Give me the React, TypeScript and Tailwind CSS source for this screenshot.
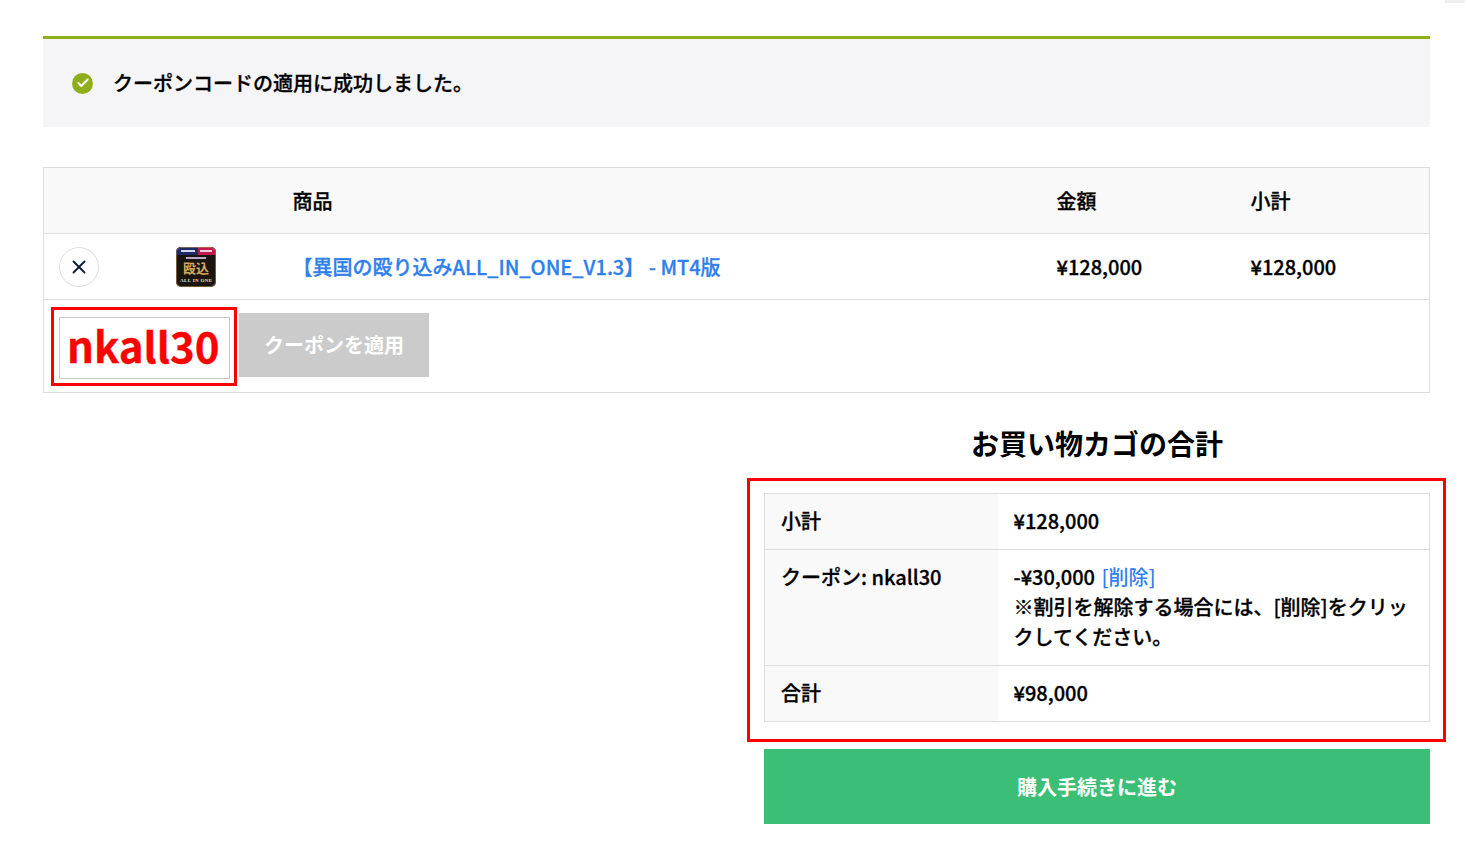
import { Check, X } from "lucide-react";

const font = "font-['Noto_Sans_CJK_JP','Noto_Sans',sans-serif]";

function Thumb() {
  return (
    <svg width="40" height="40" viewBox="0 0 40 40" className="block">
      <rect x="0" y="0" width="40" height="40" rx="5" fill="#1a1510" />
      <path d="M0 8V5a5 5 0 0 1 5-5h17v8z" fill="#1f2a6b" />
      <path d="M22 0h13a5 5 0 0 1 5 5v3H22z" fill="#c2184f" />
      <rect x="5" y="3" width="14" height="2" fill="#d8d8e8" />
      <rect x="24" y="3" width="12" height="2" fill="#f0d0d8" />
      <rect x="10" y="10" width="20" height="2" fill="#b9a8c8" />
      <text x="20" y="26" textAnchor="middle" fontSize="13" fontWeight="700" fill="#d9a75a" fontFamily="Noto Sans CJK JP, sans-serif">
        殴込
      </text>
      <text x="20" y="35" textAnchor="middle" fontSize="5" fontWeight="700" fill="#efe2c4" fontFamily="Liberation Serif, serif" textLength="32">
        ALL IN ONE
      </text>
      <rect x="0.5" y="0.5" width="39" height="39" rx="5" fill="none" stroke="#b08a4a" strokeOpacity="0.6" />
    </svg>
  );
}

export default function App() {
  return (
    <div className={`${font} relative h-[867px] overflow-hidden bg-white pl-[43px] pr-[38px] pt-[36px] text-[20px] font-medium leading-[30px] text-black [-webkit-text-stroke:0.3px_currentColor]`}>
      <div className="absolute right-[3px] top-0 h-[3px] w-[20px] bg-[#eeeeee]" />

      <div className="flex h-[91px] items-center gap-[20px] border-t-[3px] border-[#8fae1b] bg-[#f5f5f7] pl-[29px]">
        <span className="flex size-[21px] items-center justify-center rounded-full bg-[#8fae1b]">
          <Check size={14} strokeWidth={3.5} color="#fff" />
        </span>
        <span>クーポンコードの適用に成功しました。</span>
      </div>

      <table className="mt-[40px] w-full table-fixed border-collapse border border-[#dddddd]">
        <colgroup>
          <col className="w-[116px]" />
          <col className="w-[117px]" />
          <col />
          <col className="w-[194px]" />
          <col className="w-[195px]" />
        </colgroup>
        <thead>
          <tr className="h-[66px] border-b border-[#dddddd] bg-[#f9f9f9] text-left">
            <th />
            <th />
            <th className="px-[16px] font-medium">商品</th>
            <th className="px-[16px] font-medium">金額</th>
            <th className="px-[16px] font-medium">小計</th>
          </tr>
        </thead>
        <tbody>
          <tr className="h-[66px] border-b border-[#dddddd]">
            <td className="pl-[15px]">
              <span className="flex size-[40px] items-center justify-center rounded-full border border-[#dddddd]">
                <X size={22} strokeWidth={2} color="#0b1b3a" />
              </span>
            </td>
            <td className="pl-[16px]">
              <Thumb />
            </td>
            <td className="px-[16px]">
              <a href="#" className="text-[#2f80ed]">
                【異国の殴り込みALL_IN_ONE_V1.3】 - MT4版
              </a>
            </td>
            <td className="px-[16px]">¥128,000</td>
            <td className="px-[16px]">¥128,000</td>
          </tr>
          <tr className="h-[93px]">
            <td colSpan={5} className="pl-[15px]">
              <div className="flex items-start gap-[9px]">
                <input
                  readOnly
                  value="nkall30"
                  className="mt-[4px] h-[62px] w-[171px] border border-[#c8c8d0] px-[7px] pb-[8px] text-[42px] font-bold text-[#ff0000] outline-none"
                />
                <button className="h-[64px] w-[190px] bg-[#cbcbcb] text-[20px] font-bold text-white [-webkit-text-stroke:0]">
                  クーポンを適用
                </button>
              </div>
            </td>
          </tr>
        </tbody>
      </table>
      <div className="pointer-events-none absolute left-[51px] top-[307px] h-[79px] w-[186px] border-[3px] border-[#ff0000]" />

      <div className="ml-auto mt-[31px] w-[666px]">
        <h2 className="text-center text-[28px] font-bold leading-[38px] [-webkit-text-stroke:0]">お買い物カゴの合計</h2>
        <table className="mt-[31px] w-full table-fixed border-collapse border border-[#dddddd]">
          <colgroup>
            <col className="w-[233px]" />
            <col />
          </colgroup>
          <tbody>
            <tr className="h-[56px] border-b border-[#dddddd]">
              <th className="bg-[#f9f9f9] pb-[1px] pl-[16px] text-left font-medium">小計</th>
              <td className="pb-[1px] pl-[16px]">¥128,000</td>
            </tr>
            <tr className="h-[116px] border-b border-[#dddddd]">
              <th className="bg-[#f9f9f9] pl-[16px] pt-[12px] text-left align-top font-medium">クーポン: nkall30</th>
              <td className="pb-[13px] pl-[16px] pr-[16px] pt-[12px] align-top">
                -¥30,000 <a href="#" className="ml-[2px] text-[#2f80ed] [-webkit-text-stroke:0]">[削除]</a>
                <br />
                ※割引を解除する場合には、[削除]をクリックしてください。
              </td>
            </tr>
            <tr className="h-[56px]">
              <th className="bg-[#f9f9f9] pb-[1px] pl-[16px] text-left font-medium">合計</th>
              <td className="pb-[1px] pl-[16px]">¥98,000</td>
            </tr>
          </tbody>
        </table>
        <a href="#" className="mt-[27px] flex h-[75px] items-center justify-center bg-[#3bbf76] font-bold text-white [-webkit-text-stroke:0]">
          購入手続きに進む
        </a>
      </div>
      <div className="pointer-events-none absolute left-[747px] top-[478px] h-[264px] w-[699px] border-[3px] border-[#ff0000]" />
    </div>
  );
}
